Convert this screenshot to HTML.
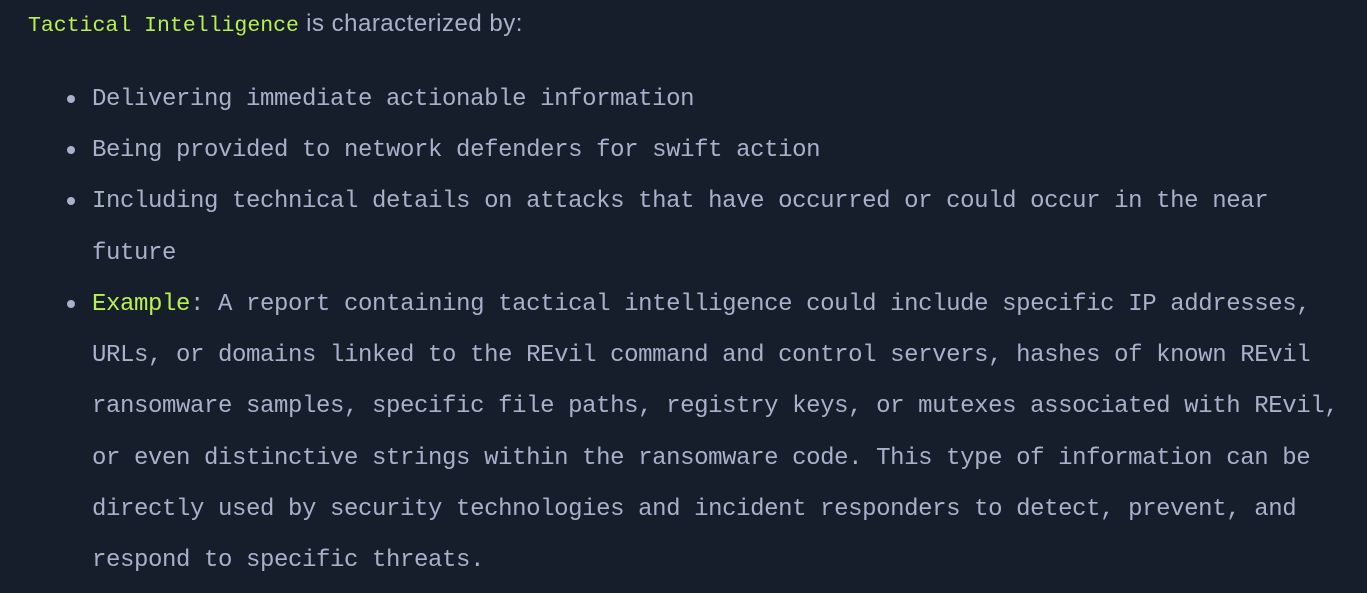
<!DOCTYPE html>
<html><head><meta charset="utf-8"><style>
html,body{margin:0;padding:0;background:#161d2b;width:1367px;height:593px;overflow:hidden}
.l{position:absolute;left:92px;height:51px;line-height:51px;font-family:"Liberation Mono",monospace;font-size:24px;letter-spacing:-0.4px;color:#a7b1ca;white-space:pre}
.g{color:#b8f24b}
.b{position:absolute;left:67px;width:8px;height:8px;border-radius:50%;background:#a7b1ca}
.h{position:absolute;left:28px;top:1px;height:46px;line-height:46px;white-space:pre;color:#a7b1ca;font-family:"Liberation Sans",sans-serif;font-size:24px;letter-spacing:0.5px}
.h .g{font-family:"Liberation Mono",monospace;font-size:21.5px;letter-spacing:0}
</style></head><body>
<div class="h"><span class="g">Tactical Intelligence</span> is characterized by:</div>
<div class="b" style="top:95px"></div>
<div class="b" style="top:146px"></div>
<div class="b" style="top:197px"></div>
<div class="b" style="top:300px"></div>
<div class="l" style="top:74px">Delivering immediate actionable information</div>
<div class="l" style="top:125px">Being provided to network defenders for swift action</div>
<div class="l" style="top:176px">Including technical details on attacks that have occurred or could occur in the near</div>
<div class="l" style="top:228px">future</div>
<div class="l" style="top:279px"><span class="g">Example</span>: A report containing tactical intelligence could include specific IP addresses,</div>
<div class="l" style="top:330px">URLs, or domains linked to the REvil command and control servers, hashes of known REvil</div>
<div class="l" style="top:381px">ransomware samples, specific file paths, registry keys, or mutexes associated with REvil,</div>
<div class="l" style="top:433px">or even distinctive strings within the ransomware code. This type of information can be</div>
<div class="l" style="top:484px">directly used by security technologies and incident responders to detect, prevent, and</div>
<div class="l" style="top:535px">respond to specific threats.</div>
</body></html>
